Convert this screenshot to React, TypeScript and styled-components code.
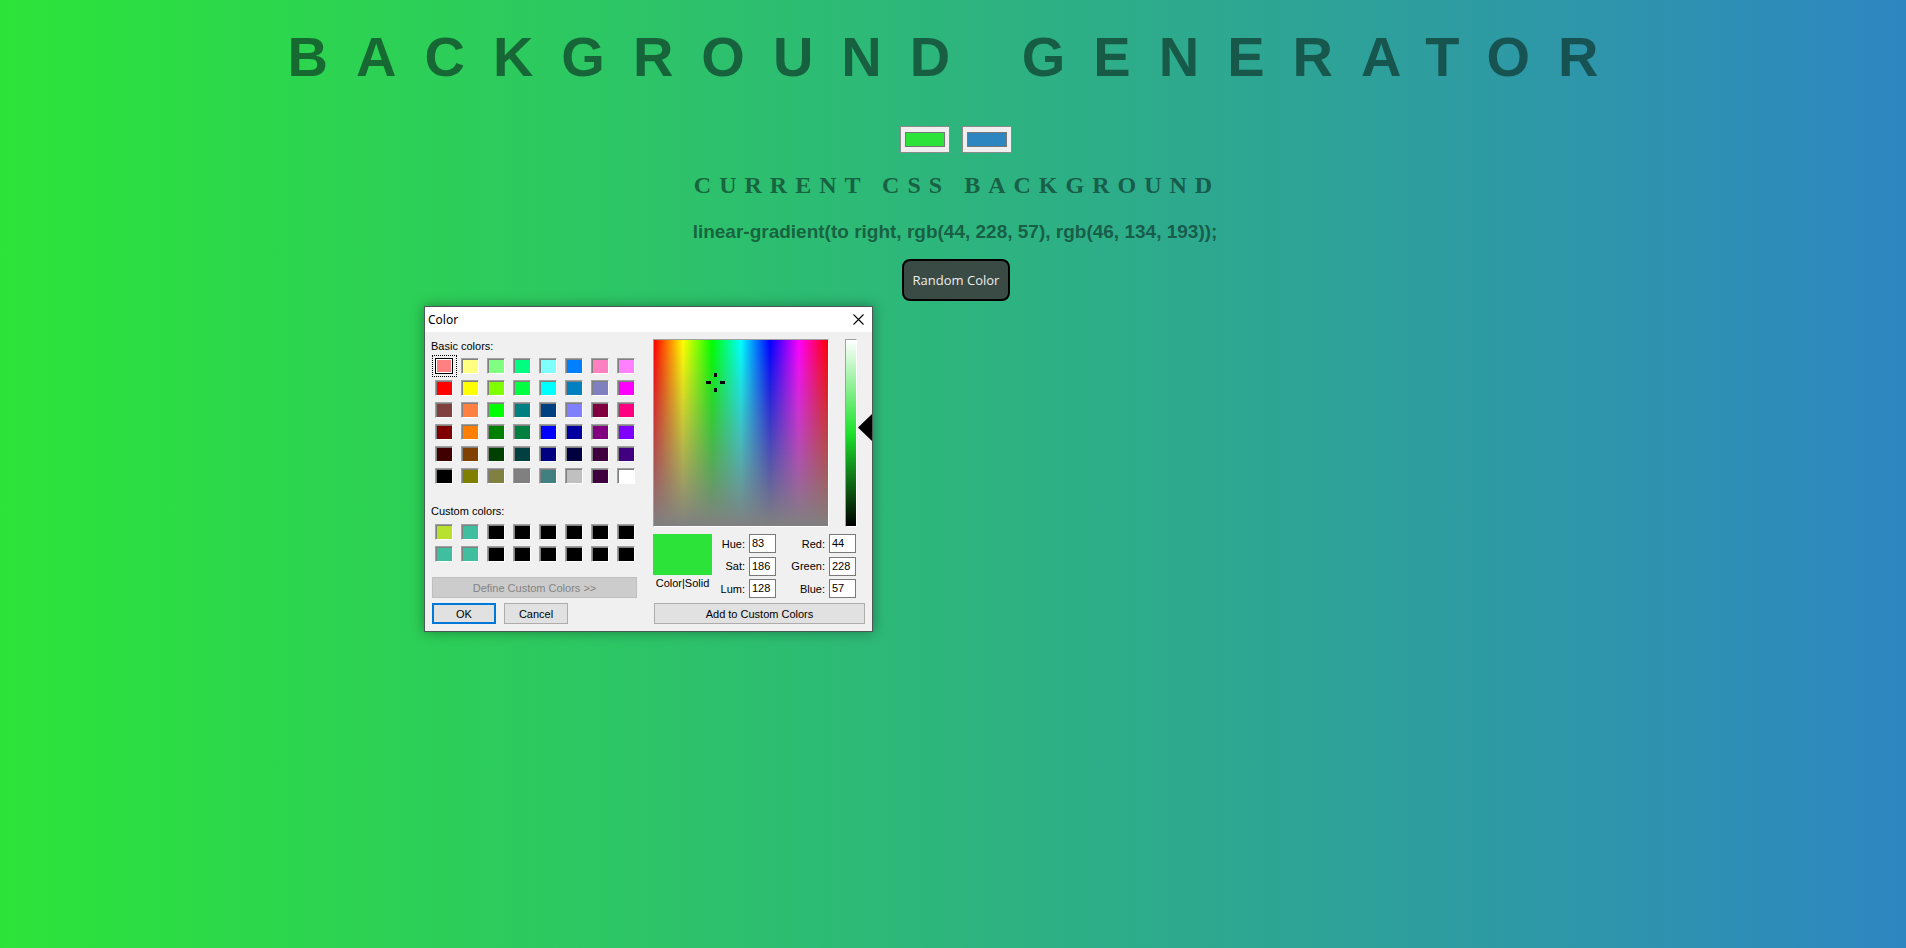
import styled, { createGlobalStyle } from 'styled-components';

const GlobalStyle = createGlobalStyle`
  html, body {
    margin: 0;
    padding: 0;
  }
  body {
    font-family: "Liberation Sans", Arial, sans-serif;
  }
`;

const BASIC = [
  '#ff8080', '#ffff80', '#80ff80', '#00ff80', '#80ffff', '#0080ff', '#ff80c0', '#ff80ff',
  '#ff0000', '#ffff00', '#80ff00', '#00ff40', '#00ffff', '#0080c0', '#8080c0', '#ff00ff',
  '#804040', '#ff8040', '#00ff00', '#008080', '#004080', '#8080ff', '#800040', '#ff0080',
  '#800000', '#ff8000', '#008000', '#008040', '#0000ff', '#0000a0', '#800080', '#8000ff',
  '#400000', '#804000', '#004000', '#004040', '#000080', '#000040', '#400040', '#400080',
  '#000000', '#808000', '#808040', '#808080', '#408080', '#c0c0c0', '#400040', '#ffffff',
];

const CUSTOM = [
  '#b8e02e', '#3fbf9f', '#000000', '#000000', '#000000', '#000000', '#000000', '#000000',
  '#3fbf9f', '#3fbf9f', '#000000', '#000000', '#000000', '#000000', '#000000', '#000000',
];

const TEXT = 'rgba(10, 40, 30, 0.62)';

const App = () => {
  const hue = 83;
  const sat = 186;
  const lum = 128;
  // spectrum is 176 x 188, lum bar same height
  const crossX = Math.round((hue / 239) * 176);
  const crossY = Math.round(((240 - sat) / 240) * 188);
  const arrowY = Math.round((1 - lum / 240) * 188);

  return (
    <>
      <GlobalStyle />
      <Page>
        <Title>BACKGROUND GENERATOR</Title>
        <Pickers>
          <ColorInput type="color" defaultValue="#2ce439" />
          <ColorInput type="color" defaultValue="#2e86c1" />
        </Pickers>
        <Heading>CURRENT CSS BACKGROUND</Heading>
        <CssText>linear-gradient(to right, rgb(44, 228, 57), rgb(46, 134, 193));</CssText>
        <RandomButton>Random Color</RandomButton>

        <Dialog>
          <TitleBar>
            <span>Color</span>
            <CloseBox>
              <svg width="11" height="11" viewBox="0 0 11 11">
                <path d="M0.5 0.5 L10.5 10.5 M10.5 0.5 L0.5 10.5" stroke="#000" strokeWidth="1.1" />
              </svg>
            </CloseBox>
          </TitleBar>
          <DialogBody>
            <LeftCol>
              <Label>Basic colors:</Label>
              <SwatchGrid>
                {BASIC.map((c, i) => (
                  <Cell key={i} $focus={i === 0}>
                    <Swatch $c={c} $selected={i === 0} />
                  </Cell>
                ))}
              </SwatchGrid>
              <Label $top={18}>Custom colors:</Label>
              <SwatchGrid $top={4}>
                {CUSTOM.map((c, i) => (
                  <Cell key={i}>
                    <Swatch $c={c} />
                  </Cell>
                ))}
              </SwatchGrid>
              <DefineButton disabled>Define Custom Colors &gt;&gt;</DefineButton>
              <ButtonRow>
                <WinButton $primary>OK</WinButton>
                <WinButton>Cancel</WinButton>
              </ButtonRow>
            </LeftCol>
            <RightCol>
              <PickerRow>
                <Spectrum>
                  <Crosshair style={{ left: crossX - 9, top: crossY - 9 }}>
                    <svg width="19" height="19" viewBox="0 0 19 19">
                      <rect x="8" y="0" width="3" height="4" fill="#000" />
                      <rect x="8" y="15" width="3" height="4" fill="#000" />
                      <rect x="0" y="8" width="5" height="3" fill="#000" />
                      <rect x="14" y="8" width="5" height="3" fill="#000" />
                    </svg>
                  </Crosshair>
                </Spectrum>
                <LumBar />
                <ArrowTrack>
                  <Arrow style={{ top: arrowY - 13 }}>
                    <svg width="14" height="27" viewBox="0 0 14 27">
                      <polygon points="0,13.5 14,0 14,27" fill="#000" />
                    </svg>
                  </Arrow>
                </ArrowTrack>
              </PickerRow>
              <ValueRow>
                <Preview>
                  <PreviewBox />
                  <PreviewLabel>Color|Solid</PreviewLabel>
                </Preview>
                <Fields>
                  <FieldLabel>Hue:</FieldLabel>
                  <FieldBox>83</FieldBox>
                  <FieldLabel>Red:</FieldLabel>
                  <FieldBox>44</FieldBox>
                  <FieldLabel>Sat:</FieldLabel>
                  <FieldBox>186</FieldBox>
                  <FieldLabel>Green:</FieldLabel>
                  <FieldBox>228</FieldBox>
                  <FieldLabel>Lum:</FieldLabel>
                  <FieldBox>128</FieldBox>
                  <FieldLabel>Blue:</FieldLabel>
                  <FieldBox>57</FieldBox>
                </Fields>
              </ValueRow>
              <AddButton>Add to Custom Colors</AddButton>
            </RightCol>
          </DialogBody>
        </Dialog>
      </Page>
    </>
  );
};

export default App;

const Page = styled.div`
  position: relative;
  min-height: 100vh;
  box-sizing: border-box;
  padding-top: 25px;
  overflow: hidden;
  text-align: center;
  background: linear-gradient(to right, rgb(44, 228, 57), rgb(46, 134, 193));
`;

const Title = styled.h1`
  margin: 0;
  padding-left: 8px;
  font: bold 56px/64px "Liberation Sans", Arial, sans-serif;
  letter-spacing: 28px;
  color: ${TEXT};
`;

const Pickers = styled.div`
  display: flex;
  justify-content: center;
  gap: 12px;
  margin-top: 37px;
  padding-left: 6px;
`;

const ColorInput = styled.input`
  width: 50px;
  height: 27px;
  margin: 0;
  padding: 1px 2px;
  box-sizing: border-box;
  border: 1px solid #8a8a8a;
  background: #efefef;
`;

const Heading = styled.h3`
  margin: 18px 0 0;
  font: bold 24px/28px "Liberation Serif", "Times New Roman", serif;
  letter-spacing: 8px;
  padding-left: 8px;
  color: ${TEXT};
`;

const CssText = styled.h3`
  margin: 22px 0 0;
  font: bold 19px/21px "Liberation Sans", Arial, sans-serif;
  padding-left: 4px;
  color: ${TEXT};
`;

const RandomButton = styled.button`
  display: block;
  margin: 17px auto 0;
  width: 108px;
  height: 42px;
  box-sizing: border-box;
  border: 2px solid #000;
  border-radius: 8px;
  background: #3a4a44;
  color: #eeeeee;
  font: 13px "Open Sans", "Noto Sans", sans-serif;
  position: relative;
  left: 3px;
  cursor: pointer;
`;

const Dialog = styled.div`
  position: absolute;
  left: 424px;
  top: 306px;
  width: 449px;
  height: 326px;
  box-sizing: border-box;
  border: 1px solid rgba(20, 40, 35, 0.75);
  background: #f0f0f0;
  box-shadow: 0 0 12px rgba(0, 0, 0, 0.35);
  text-align: left;
  color: #000;
  font: 11px "Liberation Sans", Arial, sans-serif;
`;

const TitleBar = styled.div`
  height: 25px;
  display: flex;
  align-items: center;
  justify-content: space-between;
  padding-left: 3px;
  background: #fff;
  font: 12px "Noto Sans", "Open Sans", sans-serif;
`;

const CloseBox = styled.div`
  width: 28px;
  height: 25px;
  display: flex;
  align-items: center;
  justify-content: center;
`;

const DialogBody = styled.div`
  display: flex;
  padding-left: 6px;
`;

const LeftCol = styled.div`
  width: 222px;
  display: flex;
  flex-direction: column;
  align-items: flex-start;
`;

const Label = styled.div<{ $top?: number }>`
  margin-top: ${(p) => p.$top ?? 8}px;
  line-height: 12px;
  height: 12px;
`;

const SwatchGrid = styled.div<{ $top?: number }>`
  display: grid;
  grid-template-columns: repeat(8, 26px);
  grid-auto-rows: 22px;
  margin-top: ${(p) => p.$top ?? 3}px;
  margin-left: 1px;
`;

const Cell = styled.div<{ $focus?: boolean }>`
  width: 25px;
  height: 22px;
  box-sizing: border-box;
  padding: 2px;
  border: 1px dotted ${(p) => (p.$focus ? '#000' : 'transparent')};
`;

const Swatch = styled.div<{ $c: string; $selected?: boolean }>`
  width: 18px;
  height: 16px;
  box-sizing: border-box;
  background: ${(p) => p.$c};
  border: 1px solid;
  border-color: ${(p) => (p.$selected ? '#000' : '#a0a0a0 #fff #fff #a0a0a0')};
  box-shadow: ${(p) => (p.$selected ? 'inset 0 0 0 1px #fff' : 'inset 1px 1px 0 #808080')};
`;

const WinButton = styled.button<{ $primary?: boolean }>`
  width: 64px;
  height: 21px;
  box-sizing: border-box;
  padding: 0;
  background: #e1e1e1;
  border: ${(p) => (p.$primary ? '2px solid #0078d7' : '1px solid #adadad')};
  color: #000;
  font: 11px "Liberation Sans", Arial, sans-serif;
`;

const DefineButton = styled(WinButton)`
  width: 205px;
  margin-top: 12px;
  margin-left: 1px;
  background: #cccccc;
  border-color: #bfbfbf;
  color: #838383;
`;

const ButtonRow = styled.div`
  display: flex;
  gap: 8px;
  margin-top: 5px;
  margin-left: 1px;
`;

const RightCol = styled.div`
  width: 218px;
  display: flex;
  flex-direction: column;
`;

const PickerRow = styled.div`
  display: flex;
  margin-top: 7px;
`;

const Spectrum = styled.div`
  position: relative;
  width: 177px;
  height: 188px;
  box-sizing: border-box;
  border: 1px solid;
  border-color: #a0a0a0 #fff #fff #a0a0a0;
  background:
    linear-gradient(to bottom, rgba(128, 128, 128, 0), #808080),
    linear-gradient(
      to right,
      #ff0000 0%,
      #ffff00 16.66%,
      #00ff00 33.33%,
      #00ffff 50%,
      #0000ff 66.66%,
      #ff00ff 83.33%,
      #ff0000 100%
    );
`;

const Crosshair = styled.div`
  position: absolute;
  width: 19px;
  height: 19px;
  line-height: 0;
`;

const LumBar = styled.div`
  width: 12px;
  height: 188px;
  margin-left: 16px;
  box-sizing: border-box;
  border: 1px solid;
  border-color: #a0a0a0 #fff #fff #a0a0a0;
  background: linear-gradient(to bottom, #ffffff 0%, #1de22c 50%, #000000 100%);
`;

const ArrowTrack = styled.div`
  position: relative;
  width: 13px;
  height: 188px;
  margin-left: 1px;
`;

const Arrow = styled.div`
  position: absolute;
  left: 0;
  line-height: 0;
`;

const ValueRow = styled.div`
  display: flex;
  margin-top: 7px;
`;

const Preview = styled.div`
  width: 59px;
  display: flex;
  flex-direction: column;
  align-items: center;
`;

const PreviewBox = styled.div`
  width: 59px;
  height: 41px;
  background: #2ce439;
`;

const PreviewLabel = styled.div`
  margin-top: 2px;
  line-height: 12px;
  white-space: nowrap;
`;

const Fields = styled.div`
  display: grid;
  grid-template-columns: 33px 27px 45px 27px;
  grid-auto-rows: 19px;
  column-gap: 4px;
  row-gap: 3.5px;
  align-items: center;
`;

const FieldLabel = styled.div`
  text-align: right;
  white-space: nowrap;
`;

const FieldBox = styled.div`
  height: 19px;
  box-sizing: border-box;
  padding-left: 2px;
  border: 1px solid #7a7a7a;
  background: #fff;
  line-height: 17px;
`;

const AddButton = styled(WinButton)`
  width: 211px;
  margin-top: 5px;
  margin-left: 1px;
`;
